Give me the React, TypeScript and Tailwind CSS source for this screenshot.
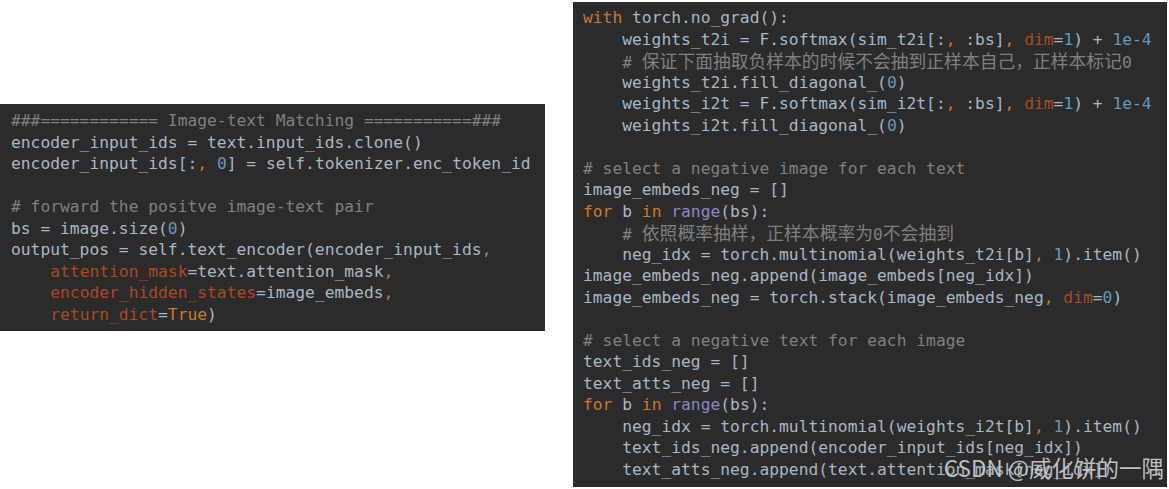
import React from "react";

type Kind = "d" | "c" | "k" | "n" | "p" | "b";
type Tok = [string, Kind];

const cls: Record<Kind, string> = {
  d: "text-[#a9b7c6]",
  c: "text-[#808080]",
  k: "text-[#cc7832]",
  n: "text-[#6897bb]",
  p: "text-[#aa4926]",
  b: "text-[#8888c6]",
};

const D = (s: string): Tok => [s, "d"];
const C = (s: string): Tok => [s, "c"];
const K = (s: string): Tok => [s, "k"];
const N = (s: string): Tok => [s, "n"];
const P = (s: string): Tok => [s, "p"];
const B = (s: string): Tok => [s, "b"];

const left: Tok[][] = [
  [C("###============ Image-text Matching ===========###")],
  [D("encoder_input_ids = text.input_ids.clone()")],
  [D("encoder_input_ids[:"), K(","), D(" "), N("0"), D("] = self.tokenizer.enc_token_id")],
  [],
  [C("# forward the positve image-text pair")],
  [D("bs = image.size("), N("0"), D(")")],
  [D("output_pos = self.text_encoder(encoder_input_ids"), K(",")],
  [D("    "), P("attention_mask"), D("=text.attention_mask"), K(",")],
  [D("    "), P("encoder_hidden_states"), D("=image_embeds"), K(",")],
  [D("    "), P("return_dict"), D("="), K("True"), D(")")],
];

const right: Tok[][] = [
  [K("with"), D(" torch.no_grad():")],
  [D("    weights_t2i = F.softmax(sim_t2i[:"), K(","), D(" :bs]"), K(","), D(" "), P("dim"), D("="), N("1"), D(") + "), N("1e-4")],
  [D("    "), C("# 保证下面抽取负样本的时候不会抽到正样本自己，正样本标记0")],
  [D("    weights_t2i.fill_diagonal_("), N("0"), D(")")],
  [D("    weights_i2t = F.softmax(sim_i2t[:"), K(","), D(" :bs]"), K(","), D(" "), P("dim"), D("="), N("1"), D(") + "), N("1e-4")],
  [D("    weights_i2t.fill_diagonal_("), N("0"), D(")")],
  [],
  [C("# select a negative image for each text")],
  [D("image_embeds_neg = []")],
  [K("for"), D(" b "), K("in"), D(" "), B("range"), D("(bs):")],
  [D("    "), C("# 依照概率抽样，正样本概率为0不会抽到")],
  [D("    neg_idx = torch.multinomial(weights_t2i[b]"), K(","), D(" "), N("1"), D(").item()")],
  [D("image_embeds_neg.append(image_embeds[neg_idx])")],
  [D("image_embeds_neg = torch.stack(image_embeds_neg"), K(","), D(" "), P("dim"), D("="), N("0"), D(")")],
  [],
  [C("# select a negative text for each image")],
  [D("text_ids_neg = []")],
  [D("text_atts_neg = []")],
  [K("for"), D(" b "), K("in"), D(" "), B("range"), D("(bs):")],
  [D("    neg_idx = torch.multinomial(weights_i2t[b]"), K(","), D(" "), N("1"), D(").item()")],
  [D("    text_ids_neg.append(encoder_input_ids[neg_idx])")],
  [D("    text_atts_neg.append(text.attention_mask[neg_idx])")],
];

function renderText(s: string) {
  const parts = s.split(/([\u3000-\u9fff\uff00-\uffef]+)/);
  return parts.map((p, i) =>
    /[\u3000-\u9fff\uff00-\uffef]/.test(p) ? (
      <span
        key={i}
        className="text-[17.8px] leading-[21.5px] [font-family:'Noto_Sans_CJK_SC',sans-serif]"
      >
        {p}
      </span>
    ) : (
      <React.Fragment key={i}>{p}</React.Fragment>
    )
  );
}

function Code({ lines }: { lines: Tok[][] }) {
  return (
    <div className="flex flex-col">
      {lines.map((line, i) => (
        <div key={i} className="h-[21.5px] leading-[21.5px] whitespace-pre">
          {line.map(([t, k], j) => (
            <span key={j} className={cls[k]}>
              {renderText(t)}
            </span>
          ))}
        </div>
      ))}
    </div>
  );
}

export default function App() {
  return (
    <div className="relative w-[1169px] h-[489px] bg-white overflow-hidden flex items-start gap-[28px] text-[16.3px] [font-family:'DejaVu_Sans_Mono','Noto_Sans_CJK_SC',monospace]">
      <div className="mt-[104px] w-[545px] h-[227px] bg-[#2b2b2b] pl-[11px] pt-[6px] shrink-0">
        <Code lines={left} />
      </div>
      <div className="mt-[2px] w-[594px] h-[485px] bg-[#2b2b2b] pl-[10px] pt-[5px] shrink-0">
        <Code lines={right} />
      </div>
      <div className="absolute right-[5px] bottom-[10px] text-[22.5px] leading-[23px] text-[rgba(225,225,225,0.85)] [font-family:'Noto_Sans_CJK_SC',sans-serif] whitespace-pre [text-shadow:0_0_1px_rgba(0,0,0,0.5)]">
        CSDN @威化饼的一隅
      </div>
    </div>
  );
}
